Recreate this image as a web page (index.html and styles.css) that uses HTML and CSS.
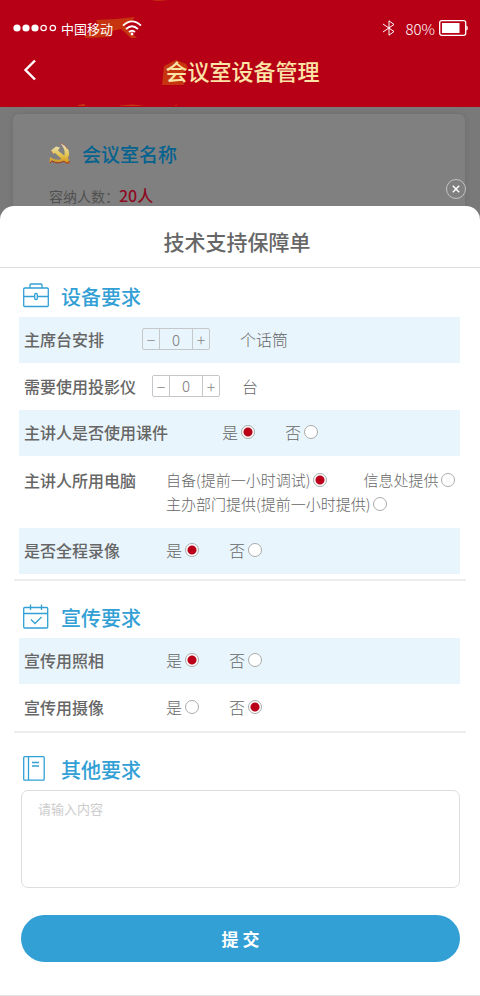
FILE: index.html
```html
<!DOCTYPE html>
<html lang="zh-CN">

<head>
    <meta charset="UTF-8">
    <meta name="viewport" content="width=device-width, initial-scale=1.0">
    <title>会议室设备管理</title>
    <link rel="stylesheet" href="styles.css">
</head>

<body>
    <header class="header">
        <svg class="header-decor" width="200" height="107" viewBox="0 0 200 107" aria-hidden="true">
            <path d="M151 0h17l-10 1zM96 20l20-1 19-2-4 5-6 4 12 12h-6l-10-9-9 2-2 6-26 1 6-6 8-7zM164 66l12-6 10 4 2 4-6 6 2 11h-22zM78 105l6-1 2 2h-8zM118 106q14-3 26 0zM174 106l4-2-2 2z" />
        </svg>
        <div class="status-bar">
            <svg width="44" height="10" viewBox="0 0 44 10" aria-hidden="true">
                <g fill="#fff">
                    <circle cx="4" cy="5" r="3.6" />
                    <circle cx="13" cy="5" r="3.6" />
                    <circle cx="22" cy="5" r="3.6" />
                </g>
                <g fill="none" stroke="#fff" stroke-width="1.2">
                    <circle cx="30.6" cy="5" r="2.7" />
                    <circle cx="39.8" cy="5" r="2.7" />
                </g>
            </svg>
            <span class="carrier">中国移动</span>
            <svg class="wifi" width="20" height="16" viewBox="0 0 20 16" aria-hidden="true">
                <g fill="none" stroke="#fff" stroke-width="1.8">
                    <path d="M1 5.600q9-8.400 18 0" />
                    <path d="M4 9q6-5.600 12 0" />
                    <path d="M7 12q3-2.600 6 0" />
                </g>
                <circle cx="10" cy="14" r="1.4" fill="#fff" />
            </svg>
            <svg class="bluetooth" width="14" height="16" viewBox="0 0 14 16" aria-hidden="true">
                <path d="M1 4l11 7.500-5 3.700V.8l5 3.700L1 12" fill="none" stroke="#fff" stroke-width="1" />
            </svg>
            <span class="battery-text">80%</span>
            <svg width="29" height="16" viewBox="0 0 29 16" aria-hidden="true">
                <rect x=".7" y=".7" width="26" height="14.6" rx="2" fill="none" stroke="#fff" stroke-width="1.3" />
                <rect x="3" y="3" width="17.500" height="10" fill="#fff" />
                <path d="M27.300 5.500q1.500 0 1.500 2.500t-1.500 2.500z" fill="#fff" />
            </svg>
        </div>
        <div class="nav-bar">
            <button class="back" type="button" aria-label="返回">
                <svg width="14" height="22" viewBox="0 0 14 22" aria-hidden="true">
                    <path d="M12 1.500L2.500 11l9.500 9.500" fill="none" stroke="#fff" stroke-width="2.400" />
                </svg>
            </button>
            <h1>会议室设备管理</h1>
        </div>
    </header>

    <main class="backdrop">
        <div class="room-card">
            <h2 class="room-name">
                <svg width="22" height="24" viewBox="0 0 22 24" aria-hidden="true">
                    <defs>
                        <linearGradient id="gold" x1="0" y1="0" x2="0" y2="24" gradientUnits="userSpaceOnUse">
                            <stop offset=".2" stop-color="#e8dfae" />
                            <stop offset=".6" stop-color="#e2c34c" />
                            <stop offset="1" stop-color="#c98412" />
                        </linearGradient>
                    </defs>
                    <path d="M11 2c6 2 10 7 9 12-1 5-6 7-11 7-3 0-5-1-6-2l-2 3H.500l.5-6c4 3 10 4 13 1 3-4 2-10-3-15z" fill="url(#gold)" />
                    <path d="M2 9.500l5-4 4 1-2 3 11 9v3.500h-3l-11-10-2 1z" fill="url(#gold)" />
                    <path d="M11 2c3 1 6 3 7.500 6M2 10l2 3" fill="none" stroke="#b06a64" />
                    <path d="M1 22l2-2c5 3 9 2 12 0l2 2h3v-2" fill="none" stroke="#a9361a" />
                </svg>
                会议室名称
            </h2>
            <p class="capacity">容纳人数：<strong>20人</strong></p>
        </div>
        <button class="close" type="button" aria-label="关闭">
            <svg width="8" height="8" viewBox="0 0 8 8" aria-hidden="true">
                <path d="M.8.8l6.400 6.400M7.200.8L.8 7.200" stroke="#fff" stroke-width="1.500" />
            </svg>
        </button>
    </main>

    <form class="sheet">
        <h2 class="sheet-title">技术支持保障单</h2>

        <section class="section">
            <h3 class="section-title">
                <svg width="26" height="26" viewBox="0 0 26 26" aria-hidden="true">
                    <rect x=".7" y="5" width="24.600" height="18.500" rx="1" />
                    <path d="M7 5V2q0-1 1-1h10q1 0 1 1v3M1 13.500h10.500M14.500 13.500H25" />
                    <rect x="11.700" y="10.500" width="2.600" height="6" rx="1" />
                </svg>
                设备要求
            </h3>
            <div class="row tinted">
                <label class="row-label" for="mic">主席台安排</label>
                <div class="stepper">
                    <button type="button" aria-label="减少话筒">−</button>
                    <input id="mic" type="text" inputmode="numeric" value="0">
                    <button type="button" aria-label="增加话筒">+</button>
                </div>
                <span class="unit">个话筒</span>
            </div>
            <div class="row">
                <label class="row-label" for="projector">需要使用投影仪</label>
                <div class="stepper">
                    <button type="button" aria-label="减少投影仪">−</button>
                    <input id="projector" type="text" inputmode="numeric" value="0">
                    <button type="button" aria-label="增加投影仪">+</button>
                </div>
                <span class="unit near">台</span>
            </div>
            <div class="row tinted" role="radiogroup" aria-labelledby="courseware">
                <span class="row-label wide" id="courseware">主讲人是否使用课件</span>
                <div class="options">
                    <label>是<input type="radio" name="courseware" checked></label>
                    <label>否<input type="radio" name="courseware"></label>
                </div>
            </div>
            <div class="row tall" role="radiogroup" aria-labelledby="computer">
                <span class="row-label medium" id="computer">主讲人所用电脑</span>
                <div class="options small">
                    <label>自备(提前一小时调试)<input type="radio" name="computer" checked></label>
                    <label>信息处提供<input type="radio" name="computer"></label>
                    <label>主办部门提供(提前一小时提供)<input type="radio" name="computer"></label>
                </div>
            </div>
            <div class="row tinted" role="radiogroup" aria-labelledby="record">
                <span class="row-label medium" id="record">是否全程录像</span>
                <div class="options">
                    <label>是<input type="radio" name="record" checked></label>
                    <label>否<input type="radio" name="record"></label>
                </div>
            </div>
        </section>

        <section class="section">
            <h3 class="section-title">
                <svg width="26" height="26" viewBox="0 0 26 26" aria-hidden="true">
                    <rect x=".7" y="3.500" width="24" height="20.500" rx="1" />
                    <path d="M1 9.500h24M7.500.5V6M18.500.5V6M8 15.500l4 4 6.500-6.500" />
                </svg>
                宣传要求
            </h3>
            <div class="row tinted" role="radiogroup" aria-labelledby="photo">
                <span class="row-label medium" id="photo">宣传用照相</span>
                <div class="options">
                    <label>是<input type="radio" name="photo" checked></label>
                    <label>否<input type="radio" name="photo"></label>
                </div>
            </div>
            <div class="row" role="radiogroup" aria-labelledby="video">
                <span class="row-label medium" id="video">宣传用摄像</span>
                <div class="options">
                    <label>是<input type="radio" name="video"></label>
                    <label>否<input type="radio" name="video" checked></label>
                </div>
            </div>
        </section>

        <section class="section last">
            <h3 class="section-title">
                <svg width="26" height="26" viewBox="0 0 26 26" aria-hidden="true">
                    <rect x=".7" y=".7" width="20.500" height="23.500" rx="1" />
                    <path d="M5.500 1v23M9 6.500h7M9 10h7" />
                </svg>
                <label for="other">其他要求</label>
            </h3>
            <textarea id="other" placeholder="请输入内容"></textarea>
            <button class="submit" type="submit">提 交</button>
        </section>
    </form>
</body>

</html>
```
FILE: styles.css
```css
:root {
    --red: #b70016;
    --blue: #32a0d5;
    --tint: #e9f5fc;
    --text: #666;
    --line: #e4e4e4;
}

* {
    margin: 0;
    padding: 0;
    box-sizing: border-box;
}

body,
button,
input,
textarea {
    font-family: "Noto Sans CJK SC", sans-serif;
}

body {
    min-height: 100vh;
    display: flex;
    flex-direction: column;
    background-color: #797979;
    color: var(--text);
}

button {
    border: none;
    background: none;
    cursor: pointer;
}

/* Header */

.header {
    position: relative;
    background-color: var(--red);
    color: #fff;
    padding: 18px 12px 20px 13px;
}

.header-decor {
    position: absolute;
    top: 0;
    left: 0;
    fill: #c63410;
}

.status-bar {
    position: relative;
    display: flex;
    align-items: center;
    height: 20px;
    font-weight: 300;
}

.carrier {
    margin-left: 4px;
    font-size: 13px;
    font-weight: 400;
}

.wifi {
    margin-left: 9px;
}

.bluetooth {
    margin-left: auto;
}

.battery-text {
    margin: 0 4px 0 9px;
    font-size: 15px;
}

.nav-bar {
    position: relative;
    display: flex;
    align-items: center;
    justify-content: center;
    margin-top: 15px;
    padding-left: 4px;
    height: 34px;
}

.nav-bar h1 {
    color: #fce3a6;
    font-size: 22px;
    font-weight: 500;
}

.back {
    position: absolute;
    left: 10px;
    top: 6px;
}

.back svg {
    display: block;
}

/* Dimmed page behind the sheet */

.backdrop {
    position: relative;
    padding: 7px 15px 0 13px;
}

.room-card {
    height: 112px;
    padding: 23px 36px 0;
    border-radius: 6px;
    background-color: #808080;
    box-shadow: 0 0 4px #6c6c6c;
}

.room-name {
    display: flex;
    align-items: center;
    gap: 11px;
    height: 32px;
    color: #04628f;
    font-size: 19px;
    font-weight: 500;
}

.capacity {
    margin-top: 14px;
    color: #505050;
    font-size: 14px;
    line-height: 24px;
}

.capacity strong {
    color: #8e0a20;
    font-size: 16px;
    font-weight: 500;
}

.close {
    position: absolute;
    right: 14px;
    top: 72px;
    display: flex;
    align-items: center;
    justify-content: center;
    width: 20px;
    height: 20px;
    border: 1px solid #c4c4c4;
    border-radius: 50%;
}

/* Bottom sheet */

.sheet {
    position: relative;
    flex: 1;
    margin-top: -20px;
    border-bottom: 1px solid var(--line);
    border-radius: 14px 14px 0 0;
    background-color: #fff;
}

.sheet-title {
    padding: 12px 6px 0 0;
    height: 62px;
    border-bottom: 1px solid #ddd;
    font-size: 21px;
    font-weight: 500;
    line-height: 46px;
    text-align: center;
}

.section {
    margin: 0 14px;
    padding: 9px 6px 5px 5px;
    border-bottom: 2px solid #ececec;
}

.section + .section {
    padding-top: 17px;
    padding-bottom: 0;
}

.section.last {
    border-bottom: none;
}

.section-title {
    display: flex;
    align-items: center;
    gap: 12px;
    height: 40px;
    padding: 0 0 2px 4px;
    color: var(--blue);
    font-size: 20px;
    font-weight: 500;
}

.section-title svg {
    fill: none;
    stroke: var(--blue);
    stroke-width: 1.3;
}

.row {
    display: flex;
    align-items: center;
    gap: 16px;
    min-height: 47px;
    padding: 0 0 2px 5px;
}

.tinted {
    min-height: 46px;
    background-color: var(--tint);
}

.tall {
    align-items: flex-start;
    padding-top: 12px;
    padding-bottom: 12px;
    line-height: 24px;
}

.row-label {
    flex-shrink: 0;
    min-width: 102px;
    font-size: 16px;
    font-weight: 500;
}

.row-label.medium {
    min-width: 126px;
}

.row-label.wide {
    min-width: 182px;
}

.stepper {
    display: flex;
    height: 22px;
    border: 1px solid #c4c8ca;
    border-radius: 2px;
}

.stepper button {
    width: 16px;
    color: #888;
    font-size: 16px;
    font-weight: 300;
    line-height: 18px;
}

.stepper input {
    width: 34px;
    border: solid #c4c8ca;
    border-width: 0 1px;
    background: none;
    color: #777;
    font-size: 15px;
    font-weight: 300;
    text-align: center;
}

.unit {
    margin-left: 14px;
    font-size: 16px;
    font-weight: 300;
}

.unit.near {
    margin-left: 6px;
}

.options {
    display: flex;
    flex-wrap: wrap;
    column-gap: 30px;
    font-size: 16px;
    font-weight: 300;
}

.options.small {
    column-gap: 36px;
    font-size: 15px;
}

.options label {
    display: flex;
    align-items: center;
    gap: 3px;
}

.options input {
    appearance: none;
    width: 14px;
    height: 14px;
    border: 1px solid #aaa;
    border-radius: 50%;
    background-color: #fff;
}

.options input:checked {
    background-image: radial-gradient(circle, #b90018 4px, transparent 5px);
}

textarea {
    display: block;
    width: calc(100% - 2px);
    height: 98px;
    margin-left: 2px;
    padding: 8px 16px;
    border: 1px solid #ddd;
    border-radius: 7px;
    color: var(--text);
    font-size: 13px;
    resize: none;
}

textarea::placeholder {
    color: #ccc;
}

.submit {
    display: block;
    width: calc(100% - 2px);
    height: 47px;
    margin: 27px 0 33px 2px;
    border-radius: 24px;
    background-color: var(--blue);
    color: #fff;
    font-size: 17px;
    font-weight: 700;
}
```
